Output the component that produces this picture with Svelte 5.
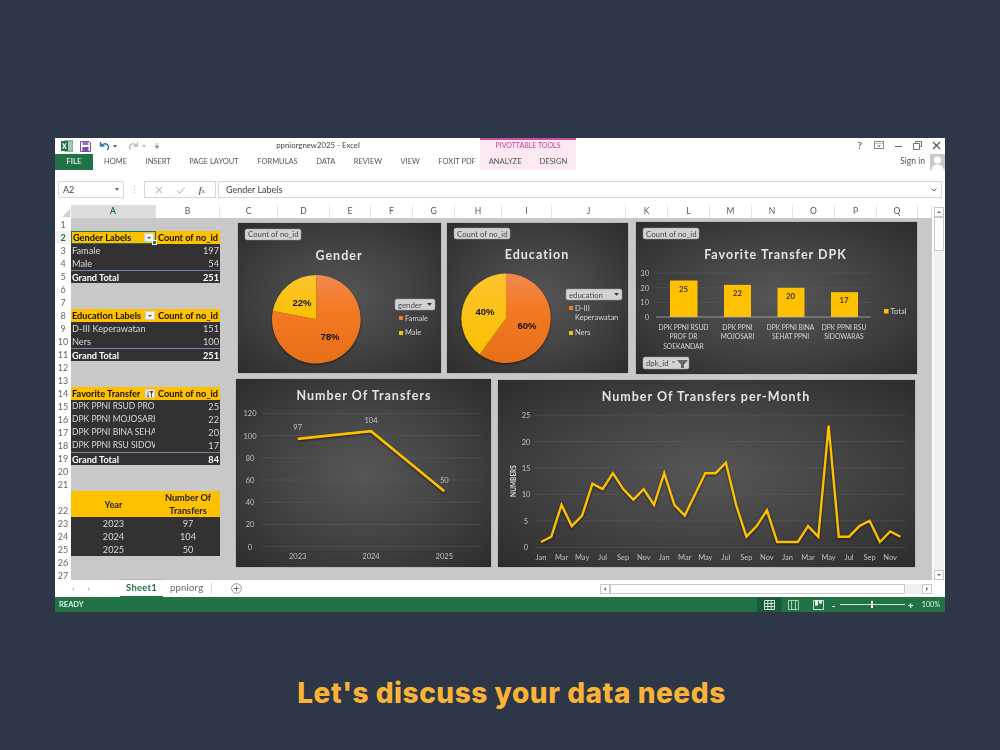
<script>
  const tabs = ['HOME', 'INSERT', 'PAGE LAYOUT', 'FORMULAS', 'DATA', 'REVIEW', 'VIEW', 'FOXIT PDF'];
  const columns = [['A', 85], ['B', 64], ['C', 58], ['D', 52], ['E', 41], ['F', 42], ['G', 42], ['H', 47], ['I', 50], ['J', 74], ['K', 42], ['L', 42], ['M', 42], ['N', 41], ['O', 42], ['P', 42], ['Q', 41], ['', 14]];
  const rows = [
    { n: 1 },
    { n: 2, kind: 'head', a: 'Gender Labels', b: 'Count of no_id', btn: 'drop', sel: true },
    { n: 3, kind: 'body', a: 'Famale', b: 197 },
    { n: 4, kind: 'body', a: 'Male', b: 54 },
    { n: 5, kind: 'total', a: 'Grand Total', b: 251 },
    { n: 6 }, { n: 7 },
    { n: 8, kind: 'head', a: 'Education Labels', b: 'Count of no_id', btn: 'drop' },
    { n: 9, kind: 'body', a: 'D-III Keperawatan', b: 151 },
    { n: 10, kind: 'body', a: 'Ners', b: 100 },
    { n: 11, kind: 'total', a: 'Grand Total', b: 251 },
    { n: 12 }, { n: 13 },
    { n: 14, kind: 'head', a: 'Favorite Transfer', b: 'Count of no_id', btn: 'sort' },
    { n: 15, kind: 'body', caps: true, a: 'DPK PPNI RSUD PROF DR SOEKANDAR', b: 25 },
    { n: 16, kind: 'body', caps: true, a: 'DPK PPNI MOJOSARI', b: 22 },
    { n: 17, kind: 'body', caps: true, a: 'DPK PPNI BINA SEHAT PPNI', b: 20 },
    { n: 18, kind: 'body', caps: true, a: 'DPK PPNI RSU SIDOWARAS', b: 17 },
    { n: 19, kind: 'total', a: 'Grand Total', b: 84 },
    { n: 20 }, { n: 21 },
    { n: 22, kind: 'yearhead', a: 'Year', b: 'Number Of Transfers' },
    { n: 23, kind: 'year', a: 2023, b: 97 },
    { n: 24, kind: 'year', a: 2024, b: 104 },
    { n: 25, kind: 'year', a: 2025, b: 50 },
    { n: 26 }, { n: 27 }
  ];

  function slice(cx, cy, r, from, to) {
    const p = (f) => [cx + r * Math.sin(f * 2 * Math.PI), cy - r * Math.cos(f * 2 * Math.PI)];
    const [x0, y0] = p(from), [x1, y1] = p(to);
    return `M${cx} ${cy}L${x0.toFixed(2)} ${y0.toFixed(2)}A${r} ${r} 0 ${to - from > 0.5 ? 1 : 0} 1 ${x1.toFixed(2)} ${y1.toFixed(2)}Z`;
  }

  const bars = [
    { x: 670, w: 27.5, v: 25, lines: ['DPK PPNI RSUD', 'PROF DR', 'SOEKANDAR'], c: 683.5 },
    { x: 724, w: 27, v: 22, lines: ['DPK PPNI', 'MOJOSARI'], c: 737.5 },
    { x: 777.5, w: 27, v: 20, lines: ['DPK PPNI BINA', 'SEHAT PPNI'], c: 790.5 },
    { x: 831, w: 27, v: 17, lines: ['DPK PPNI RSU', 'SIDOWARAS'], c: 844 }
  ];
  const barY = (v) => 317 - v * 1.46;

  const yearly = [['2023', 97, 297.7], ['2024', 104, 371], ['2025', 50, 444.3]];
  const lineY = (v) => 546.7 - v * 1.111;
  const yearlyPts = yearly.map((d) => `${d[2]},${lineY(d[1]).toFixed(1)}`).join(' ');

  const monthly = [1, 2, 8, 4, 6, 12, 11, 14, 11, 9, 11, 8, 14, 8, 6, 10, 14, 14, 16, 8, 2, 4, 7, 1, 1, 1, 4, 2, 23, 2, 2, 4, 5, 1, 3, 2];
  const names = ['Jan', 'Mar', 'May', 'Jul', 'Sep', 'Nov'];
  const monX = (i) => 541 + i * 10.27;
  const monY = (v) => 547.3 - v * 5.29;
  const monPts = monthly.map((v, i) => `${monX(i).toFixed(1)},${monY(v).toFixed(1)}`).join(' ');
  const monLabels = Array.from({ length: 18 }, (_, i) => ({ x: monX(i * 2), t: names[i % 6] }));
</script>

<div class="page">
  <div class="window">
    <div class="titlebar">
      <div class="qat">
        <svg width="12" height="12" viewBox="0 0 12 12"><rect x="4" y="1" width="8" height="10" fill="#fff" stroke="#217346"/><path d="M7 3h4M7 5h4M7 7h4M7 9h4" stroke="#217346" stroke-width=".8"/><rect x="0" y="1" width="7" height="10" fill="#217346"/><path d="M1.6 3.2l3.6 5.6M5.2 3.2L1.6 8.8" stroke="#fff" stroke-width="1.2"/></svg>
        <svg class="save" width="11" height="11" viewBox="0 0 11 11"><path d="M.5.5h8.5l1.5 1.5v8.500H.5z" fill="#fff" stroke="#7b4ca8"/><rect x="2.500" y=".5" width="6" height="3.500" fill="#9a73c4"/><rect x="2.500" y="6" width="6" height="4.500" fill="#7b4ca8"/></svg>
        <svg class="undo" width="11" height="10" viewBox="0 0 11 10"><path d="M1.500 1v4h4M1.800 4.800C3.500 2.600 7 2.200 8.600 4c1.200 1.400 1 3.400-.4 5" fill="none" stroke="#2f75b5" stroke-width="1.5"/></svg>
        <span class="caret"></span>
        <svg class="redo" width="11" height="10" viewBox="0 0 11 10"><path d="M9.500 1v4h-4M9.200 4.800C7.500 2.600 4 2.200 2.400 4c-1.200 1.400-1 3.400.4 5" fill="none" stroke="#b9bcc0" stroke-width="1.3"/></svg>
        <span class="caret light"></span>
        <svg class="custom" width="6" height="6" viewBox="0 0 6 6"><path d="M1 1h4M1 3h4l-2 2.400z" fill="#888" stroke="#888" stroke-width=".6"/></svg>
      </div>
      <div class="doc">ppniorgnew2025 - Excel</div>
      <div class="pivot-top">PIVOTTABLE TOOLS</div>
      <div class="winctl">
        <span class="help">?</span>
        <svg width="10" height="8" viewBox="0 0 10 8"><rect x=".5" y=".5" width="9" height="7" fill="none" stroke="#888"/><path d="M.5 2.500h9M3.500 4.500h3L5 6z" fill="#888" stroke="#888" stroke-width=".5"/></svg>
        <svg width="9" height="9" viewBox="0 0 9 9"><path d="M1 5.500h7" stroke="#666" stroke-width="1"/></svg>
        <svg width="9" height="9" viewBox="0 0 9 9"><path d="M2.500 2.500V.5h6v5h-2M.5 2.500h6v6h-6z" fill="none" stroke="#666" stroke-width=".9"/></svg>
        <svg width="9" height="9" viewBox="0 0 9 9"><path d="M1 1l7 7M8 1L1 8" stroke="#555" stroke-width="1.2"/></svg>
      </div>
    </div>

    <div class="tabsrow">
      <div class="tabs-left">
        <div class="file">FILE</div>
        {#each tabs as t}<span class="tab">{t}</span>{/each}
      </div>
      <div class="pivot-tabs"><span>ANALYZE</span><span>DESIGN</span></div>
      <div class="signin">
        <span>Sign in</span>
        <svg class="avatar" width="15" height="16" viewBox="0 0 15 16"><rect width="15" height="16" fill="#c9c9c9"/><circle cx="7.500" cy="6" r="3.600" fill="#fff"/><path d="M1.500 16c.4-4 3-5.600 6-5.600s5.600 1.600 6 5.600z" fill="#fff"/></svg>
      </div>
    </div>

    <div class="formula">
      <div class="namebox"><span>A2</span><i class="mini"></i></div>
      <div class="grip"></div>
      <div class="fbtns">
        <svg width="8" height="8" viewBox="0 0 8 8"><path d="M1 1l6 6M7 1L1 7" stroke="#c4c4c4" stroke-width="1.1"/></svg>
        <svg width="10" height="8" viewBox="0 0 10 8"><path d="M1 4.500l2.600 2.600L9 1" fill="none" stroke="#c4c4c4" stroke-width="1.1"/></svg>
        <span class="fx">f<small>x</small></span>
      </div>
      <div class="finput"><span>Gender Labels</span>
        <svg width="6" height="4" viewBox="0 0 6 4"><path d="M.5.5L3 3 5.500.5" fill="none" stroke="#666" stroke-width="1"/></svg>
      </div>
    </div>

    <div class="sheet">
      <div class="main">
        <div class="colheads">
          <div class="corner"><i></i></div>
          {#each columns as [name, w]}
            <div class="col" class:active={name === 'A'} style="width:{w}px">{name}</div>
          {/each}
        </div>
        <div class="rows">
          {#each rows as r}
            <div class="row" class:tall={r.n === 22}>
              <div class="rownum" class:cur={r.n === 2}>{r.n}</div>
              {#if r.kind}
                <div class="cell a {r.kind}" class:sel={r.sel} class:caps={r.caps}>
                  <span class="txt">{r.a}</span>
                  {#if r.btn === 'drop'}
                    <i class="fbtn"><b></b></i>
                  {:else if r.btn === 'sort'}
                    <i class="fbtn"><svg width="8" height="8" viewBox="0 0 8 8"><path d="M2 1v6M1 5.500L2 7l1-1.500" fill="none" stroke="#444" stroke-width=".8"/><path d="M3.400 1h4L5.900 3.400V7H5V3.400z" fill="#444"/></svg></i>
                  {/if}
                  {#if r.sel}<em class="handle"></em>{/if}
                </div>
                <div class="cell b {r.kind}"><span class="txt">{r.b}</span></div>
              {/if}
            </div>
          {/each}
        </div>

        <div class="chart gender">
          <svg viewBox="238 223 203 150" width="203" height="150">
            <defs>
              <linearGradient id="org" x1="0" y1="0" x2="0" y2="1"><stop offset="0" stop-color="#f0894f"/><stop offset=".4" stop-color="#f47a22"/><stop offset="1" stop-color="#e66f18"/></linearGradient>
              <linearGradient id="yel" x1="0" y1="0" x2="0" y2="1"><stop offset="0" stop-color="#fcc42e"/><stop offset="1" stop-color="#fbc000"/></linearGradient>
            </defs>
            <rect class="pill" x="245" y="229" width="56" height="11" rx="2"/>
            <text class="pilltxt" x="248" y="237">Count of no_id</text>
            <text class="title" x="339" y="260">Gender</text>
            <g class="pie">
              <path d={slice(316.3, 319.3, 44.3, 0, 0.78)} fill="url(#org)"/>
              <path d={slice(316.3, 319.3, 44.3, 0.78, 1)} fill="url(#yel)"/>
            </g>
            <text class="pct" x="302" y="305.500">22%</text>
            <text class="pct" x="330" y="340">78%</text>
            <rect class="pill" x="395" y="299" width="40" height="11" rx="2"/>
            <text class="pilltxt" x="398" y="307.500">gender</text>
            <path d="M427 303h5l-2.500 2.800z" fill="#333"/>
            <rect x="399" y="316" width="4" height="4" fill="#f47a22"/>
            <text class="leg" x="405" y="320.500">Famale</text>
            <rect x="399" y="331" width="4" height="4" fill="#ffc000"/>
            <text class="leg" x="405" y="335">Male</text>
          </svg>
        </div>

        <div class="chart education">
          <svg viewBox="447 223 181 150" width="181" height="150">
            <rect class="pill" x="454" y="228" width="56" height="11" rx="2"/>
            <text class="pilltxt" x="457" y="236.500">Count of no_id</text>
            <text class="title" x="537" y="259">Education</text>
            <g class="pie">
              <path d={slice(506, 318.3, 44.7, 0, 0.6)} fill="url(#org)"/>
              <path d={slice(506, 318.3, 44.7, 0.6, 1)} fill="url(#yel)"/>
            </g>
            <text class="pct" x="485" y="315">40%</text>
            <text class="pct" x="527" y="329">60%</text>
            <rect class="pill" x="566" y="289" width="56" height="11" rx="2"/>
            <text class="pilltxt" x="569" y="298">education</text>
            <path d="M614 293h5l-2.500 2.800z" fill="#333"/>
            <rect x="569" y="306" width="4" height="4" fill="#f47a22"/>
            <text class="leg" x="575" y="310.500">D-III</text>
            <text class="leg" x="575" y="320">Keperawatan</text>
            <rect x="569" y="331" width="4" height="4" fill="#ffc000"/>
            <text class="leg" x="575" y="335">Ners</text>
          </svg>
        </div>

        <div class="chart dpk">
          <svg viewBox="636 222 281 152" width="281" height="152">
            <rect class="pill" x="643" y="228" width="56" height="11" rx="2"/>
            <text class="pilltxt" x="646" y="236.500">Count of no_id</text>
            <text class="title" x="775.500" y="259">Favorite Transfer DPK</text>
            {#each [30, 20, 10] as v}
              <line class="grid" x1="656" x2="871" y1={barY(v)} y2={barY(v)}/>
            {/each}
            {#each [30, 20, 10, 0] as v}
              <text class="axis end" x="649" y={barY(v) + 3}>{v}</text>
            {/each}
            {#each bars as b}
              <rect x={b.x} y={barY(b.v)} width={b.w} height={b.v * 1.46} fill="#ffc000"/>
              <text class="barval" x={b.c} y={barY(b.v) + 11}>{b.v}</text>
              {#each b.lines as l, i}
                <text class="cat" x={b.c} y={329.500 + i * 9.500}>{l}</text>
              {/each}
            {/each}
            <line x1="656" x2="871" y1="317" y2="317" stroke="#bdbdbd" stroke-width=".7"/>
            <rect x="884" y="309" width="4.500" height="4.500" fill="#ffc000"/>
            <text class="leg" x="890.500" y="313.500">Total</text>
            <rect class="pill" x="643" y="357" width="46" height="12" rx="2"/>
            <text class="pilltxt" x="646" y="366">dpk_id</text>
            <path d="M677 360h11l-4 4.500v3.500h-3v-3.500z" fill="#666"/>
            <path d="M672 361.500h3v1h-3z" fill="#666"/>
          </svg>
        </div>

        <div class="chart yearly">
          <svg viewBox="236 379 255 188" width="255" height="188">
            <text class="title" x="364" y="399.500">Number Of Transfers</text>
            {#each [120, 100, 80, 60, 40, 20, 0] as v}
              <line class="grid" x1="262" x2="481" y1={lineY(v)} y2={lineY(v)}/>
              <text class="axis mid" x="250" y={lineY(v) + 3}>{v}</text>
            {/each}
            <polyline class="line" points={yearlyPts} stroke-width="2.600"/>
            {#each yearly as d}
              <text class="axis mid" x={d[2]} y="559">{d[0]}</text>
              <text class="axis mid" x={d[2]} y={lineY(d[1]) - 8.500}>{d[1]}</text>
            {/each}
          </svg>
        </div>

        <div class="chart monthly">
          <svg viewBox="498 380 417 187" width="417" height="187">
            <text class="title" x="706" y="400.500">Number Of Transfers per-Month</text>
            {#each [25, 20, 15, 10, 5, 0] as v}
              <line class="grid" x1="535" x2="905" y1={monY(v)} y2={monY(v)}/>
              <text class="axis mid" x="526" y={monY(v) + 3}>{v}</text>
            {/each}
            <text class="ylab" transform="translate(516 481) rotate(-90)">NUMBERS</text>
            <polyline class="line" points={monPts} stroke-width="2.400"/>
            {#each monLabels as l}
              <text class="axis mid" x={l.x} y="560">{l.t}</text>
            {/each}
          </svg>
        </div>
      </div>

      <div class="vscroll">
        <div class="arrowbox"><i class="up"></i></div>
        <div class="vthumb"></div>
        <div class="vspace"></div>
        <div class="arrowbox"><i class="down"></i></div>
      </div>
    </div>

    <div class="sheetbar">
      <div class="navs"><i class="lt"></i><i class="rt"></i></div>
      <div class="stab on">Sheet1</div>
      <div class="stab">ppniorg</div>
      <div class="sep"></div>
      <svg class="plus" width="11" height="11" viewBox="0 0 11 11"><circle cx="5.500" cy="5.500" r="4.800" fill="none" stroke="#777" stroke-width=".8"/><path d="M5.500 2.800v5.400M2.800 5.500h5.400" stroke="#666" stroke-width=".9"/></svg>
      <div class="hscroll">
        <div class="arrowbox"><i class="lt"></i></div>
        <div class="hthumb"></div>
        <div class="hspace"></div>
        <div class="arrowbox"><i class="rt"></i></div>
      </div>
    </div>

    <div class="status">
      <span class="ready">READY</span>
      <div class="views">
        <span class="view on"><svg width="11" height="10" viewBox="0 0 11 10"><path d="M.5.5h10v9H.5zM.5 3.500h10M.5 6.500h10M3.800.5v9M7.200.5v9" fill="none" stroke="#e4efe8" stroke-width=".9"/></svg></span>
        <span class="view"><svg width="11" height="10" viewBox="0 0 11 10"><path d="M.5.5h10v9H.5zM3.500.5v9M7.500.5v9" fill="none" stroke="#b9d3c4" stroke-width=".9"/></svg></span>
        <span class="view"><svg width="11" height="10" viewBox="0 0 11 10"><path d="M.5.5h10v9H.5z" fill="none" stroke="#dceae2" stroke-width=".9"/><path d="M2 .5h3v5H2zM6 .5h3v3H6z" fill="#eef5f0"/></svg></span>
      </div>
      <div class="zoomer">
        <span class="zm">-</span>
        <div class="slider"><i></i></div>
        <span class="zm">+</span>
        <span class="pctz">100%</span>
      </div>
    </div>
  </div>

  <p class="caption">Let's discuss your data needs</p>
</div>

<style>
  :global(body) { margin: 0; background: #2d3748; }
  .page { width: 1000px; height: 750px; box-sizing: border-box; padding-top: 138px; display: flex; flex-direction: column; align-items: center; overflow: hidden; background: #2d3748; }
  .window { width: 890px; height: 474px; background: #fff; display: flex; flex-direction: column; font-family: Lato, "Open Sans", sans-serif; color: #555; filter: blur(0.4px); }
  .caption { margin: 67px 0 0 23px; font: 800 28px/1 Inter, "Noto Sans", sans-serif; color: #fbb336; letter-spacing: .55px; white-space: nowrap; }

  .titlebar { height: 16px; display: flex; align-items: center; flex: none; }
  .qat { display: flex; align-items: center; width: 105px; padding-left: 6px; box-sizing: border-box; flex: none; }
  .save { margin-left: 7px; }
  .undo { margin-left: 8px; }
  .redo { margin-left: 11px; }
  .custom { margin-left: 8px; }
  .caret { width: 0; height: 0; margin-left: 3px; border: 2px solid transparent; border-top: 3px solid #666; border-bottom: 0; }
  .caret.light { border-top-color: #bbb; }
  .doc { flex: 1; text-align: center; font-size: 7.800px; color: #444; padding: 0 4px 2px 0; }
  .pivot-top { width: 96px; height: 16px; box-sizing: border-box; background: #fbe8f3; border-top: 2px solid #c9509c; color: #b8498f; font-size: 7px; text-align: center; line-height: 11px; flex: none; }
  .winctl { width: 369px; flex: none; display: flex; justify-content: flex-end; align-items: center; gap: 10px; padding: 0 4px 2px 0; box-sizing: border-box; }
  .help { font-size: 10px; font-weight: 700; color: #666; line-height: 1; margin-right: 2px; }

  .tabsrow { height: 16px; display: flex; flex: none; align-items: center; }
  .tabs-left { width: 425px; flex: none; display: flex; align-items: center; gap: 18.500px; }
  .file { width: 38px; height: 16px; flex: none; background: #217346; color: #fff; font-size: 8px; line-height: 15px; text-align: center; margin-right: -7.500px; }
  .tab { font-size: 7.500px; color: #555; white-space: nowrap; padding-bottom: 2px; }
  .pivot-tabs { width: 96px; height: 16px; flex: none; background: #fbe8f3; display: flex; justify-content: center; gap: 18px; font-size: 7.600px; line-height: 14px; color: #555; }
  .signin { flex: 1; display: flex; justify-content: flex-end; align-items: center; gap: 5px; font-size: 8.500px; color: #555; }
  .signin span { padding-bottom: 2px; }

  .formula { height: 28px; flex: none; box-sizing: border-box; padding: 11px 3px 0; display: flex; align-items: stretch; }
  .namebox { width: 66px; box-sizing: border-box; border: 1px solid #d8d8d8; display: flex; align-items: center; justify-content: space-between; padding: 0 4px; font-size: 9px; color: #444; }
  .mini { width: 0; height: 0; border: 2.500px solid transparent; border-top: 3px solid #666; border-bottom: 0; }
  .grip { width: 20px; position: relative; }
  .grip::after { content: ""; position: absolute; left: 10px; top: 5px; width: 1px; height: 8px; background: repeating-linear-gradient(#bbb 0 1px, transparent 1px 3px); }
  .fbtns { width: 72px; box-sizing: border-box; border: 1px solid #d8d8d8; display: flex; align-items: center; justify-content: space-around; padding: 0 4px; }
  .fx { font: italic 700 9px "Liberation Serif", serif; color: #666; }
  .fx small { font-size: 6px; }
  .finput { flex: 1; margin-left: 2px; border: 1px solid #d8d8d8; display: flex; align-items: center; justify-content: space-between; padding: 0 4px 0 7px; font-size: 9px; color: #444; }

  .sheet { flex: none; height: 375px; margin-top: 7px; display: flex; }
  .main { width: 877px; height: 375px; position: relative; overflow: hidden; display: flex; flex-direction: column; }
  .colheads { height: 13px; flex: none; display: flex; border-bottom: 1px solid #a9a9a9; box-sizing: content-box; margin-bottom: -1px; }
  .corner { width: 16px; flex: none; position: relative; }
  .corner i { position: absolute; right: 1px; bottom: 1px; border: 4px solid transparent; border-right-color: #d0d0d0; border-bottom-color: #d0d0d0; }
  .col { box-sizing: border-box; flex: none; height: 13px; border-right: 1px solid #e4e4e4; text-align: center; font-size: 8.500px; line-height: 13px; color: #555; }
  .col.active { background: #dcdcdc; border-bottom: 1px solid #217346; color: #217346; font-weight: 700; height: 14px; }

  .rows { flex: 1; background: #c8c8c8; overflow: hidden; }
  .row { height: 13px; display: flex; }
  .row.tall { height: 26px; }
  .rownum { width: 16px; flex: none; background: #fff; color: #666; font-size: 9px; line-height: 13px; display: flex; align-items: flex-end; justify-content: center; }
  .rownum.cur { color: #217346; font-weight: 700; background: #f2f2f2; }
  .cell { box-sizing: border-box; height: 100%; display: flex; align-items: center; font-size: 9.200px; line-height: 13px; overflow: hidden; position: relative; padding: 0 1px; }
  .cell.a { width: 85px; }
  .cell.b { width: 64px; justify-content: flex-end; }
  .cell.caps { font-size: 8.500px; }
  .txt { white-space: nowrap; overflow: hidden; }
  .head, .yearhead { background: #ffc000; color: #111; font-weight: 700; }
  .body, .total, .year { background: #333132; color: #d8d8d8; }
  .total { color: #fff; font-weight: 700; border-top: 1px solid #6f86a8; }
  .head.b { justify-content: flex-start; padding-left: 2px; }
  .year, .yearhead { justify-content: center; text-align: center; }
  .year.b, .yearhead.b { justify-content: center; }
  .yearhead .txt { white-space: normal; color: #222; }
  .cell.sel { border: 1px solid #217346; overflow: visible; z-index: 1; }
  .handle { position: absolute; right: -2px; bottom: -2px; width: 3px; height: 3px; background: #217346; border: 1px solid #fff; box-sizing: content-box; }
  .fbtn { margin-left: auto; width: 10px; height: 9px; flex: none; background: #f4f4f4; border: 1px solid #d0d0d0; box-sizing: border-box; display: flex; align-items: center; justify-content: center; }
  .fbtn b { width: 0; height: 0; border: 2px solid transparent; border-top: 2.500px solid #555; border-bottom: 0; }
  .fbtn svg { display: block; }

  .chart { position: absolute; background: radial-gradient(ellipse at center, #565656 0%, #434343 50%, #2c2c2c 100%); box-shadow: 0 0 1px #777; }
  .chart svg { display: block; }
  .gender { left: 183px; top: 18px; width: 203px; height: 150px; }
  .education { left: 392px; top: 18px; width: 181px; height: 150px; }
  .dpk { left: 581px; top: 17px; width: 281px; height: 152px; }
  .yearly { left: 181px; top: 174px; width: 255px; height: 188px; }
  .monthly { left: 443px; top: 175px; width: 417px; height: 187px; }

  .pill { fill: #d2d2d2; stroke: #9b9b9b; stroke-width: .5; }
  .pilltxt { font: 7.800px Lato, sans-serif; fill: #484848; }
  .title { font: 700 12.500px Lato, sans-serif; fill: #e4e4e4; text-anchor: middle; letter-spacing: 1px; }
  .pie { filter: drop-shadow(0 1px 1px rgba(0,0,0,.55)); }
  .pct { font: 700 9.500px "Liberation Sans", sans-serif; fill: #111; text-anchor: middle; }
  .leg { font: 7.500px Lato, sans-serif; fill: #d4d4d4; }
  .grid { stroke: #5e5e5e; stroke-width: .5; }
  .axis { font: 7.500px Lato, sans-serif; fill: #c0c0c0; }
  .axis.end { text-anchor: end; }
  .axis.mid { text-anchor: middle; }
  .barval { font: 700 7.800px Lato, sans-serif; fill: #333; text-anchor: middle; }
  .cat { font: 6.700px Lato, sans-serif; fill: #d4d4d4; text-anchor: middle; }
  .ylab { font: 700 6.500px Lato, sans-serif; fill: #d8d8d8; text-anchor: middle; }
  .line { fill: none; stroke: #ffc000; stroke-linejoin: miter; filter: drop-shadow(0 1px 1px rgba(0,0,0,.6)); }

  .vscroll { flex: 1; display: flex; flex-direction: column; align-items: center; padding-top: 2px; box-sizing: border-box; }
  .arrowbox { width: 10px; height: 10px; flex: none; box-sizing: border-box; border: 1px solid #c8c8c8; background: #fff; display: flex; align-items: center; justify-content: center; }
  .arrowbox i { width: 0; height: 0; border: 2px solid transparent; }
  i.up { border-bottom-color: #666; border-top: 0; }
  i.down { border-top-color: #666; border-bottom: 0; }
  i.lt { border-right-color: #666; border-left: 0; }
  i.rt { border-left-color: #666; border-right: 0; }
  .vthumb { width: 10px; height: 34px; flex: none; box-sizing: border-box; border: 1px solid #c8c8c8; background: #fff; }
  .vspace { flex: 1; width: 10px; background: #f0f0f0; }

  .sheetbar { height: 17px; flex: none; display: flex; align-items: center; position: relative; }
  .navs { width: 65px; flex: none; display: flex; gap: 14px; padding-left: 17px; box-sizing: border-box; }
  .navs i { width: 0; height: 0; border: 2.500px solid transparent; }
  .navs i.lt { border-right-color: #c4c4c4; border-left: 0; }
  .navs i.rt { border-left-color: #c4c4c4; border-right: 0; }
  .stab { height: 17px; line-height: 16px; box-sizing: border-box; font-size: 9.500px; color: #666; padding: 0 7px; letter-spacing: .2px; }
  .stab.on { width: 43px; text-align: center; padding: 0; color: #217346; font-weight: 700; border-bottom: 1px solid #217346; box-shadow: 0 -1px 1px rgba(0,0,0,.08); }
  .sep { width: 1px; height: 11px; background: #d6d6d6; margin-left: 1px; }
  .plus { margin-left: 19px; }
  .hscroll { margin-left: auto; margin-right: 13px; width: 332px; display: flex; align-items: center; height: 11px; }
  .hthumb { width: 295px; height: 10px; flex: none; box-sizing: border-box; border: 1px solid #c8c8c8; background: #fff; }
  .hspace { flex: 1; height: 10px; background: #f0f0f0; }

  .status { height: 15px; flex: none; background: #217346; color: #dcebe2; display: flex; align-items: center; font-size: 7.500px; }
  .ready { margin-left: 4px; font-weight: 700; }
  .views { margin-left: auto; display: flex; height: 15px; }
  .view { width: 24.500px; display: flex; align-items: center; justify-content: center; }
  .view.on { background: #1a5c38; }
  .zoomer { display: flex; align-items: center; margin-right: 5px; }
  .zm { font-weight: 700; font-size: 10px; color: #fff; line-height: 1; width: 6px; text-align: center; }
  .slider { width: 65px; height: 1px; background: #cfe2d6; margin: 0 3px; position: relative; }
  .slider i { position: absolute; left: 31px; top: -3px; width: 2px; height: 7px; background: #fff; }
  .pctz { margin-left: 8px; font-size: 7.200px; }
</style>
